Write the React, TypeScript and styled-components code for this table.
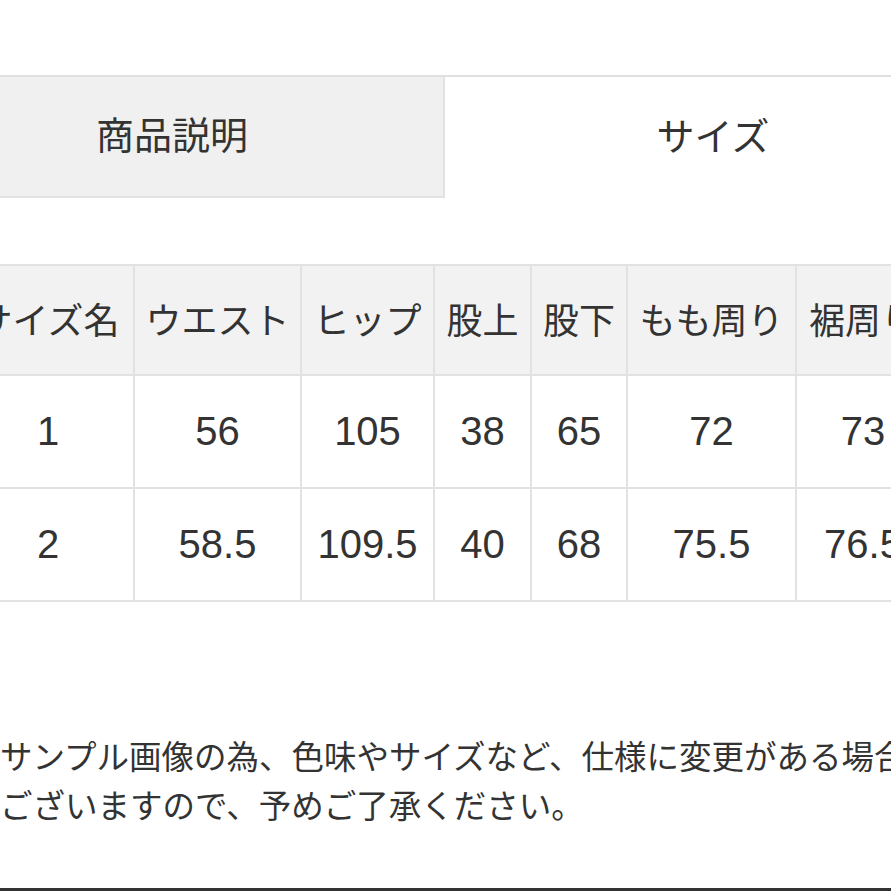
import styled, { createGlobalStyle } from 'styled-components'

const GlobalStyle = createGlobalStyle`
  html, body {
    margin: 0;
    padding: 0;
    background: #fff;
    overflow: hidden;
  }
  body {
    font-family: "Liberation Sans", "Noto Sans CJK JP", sans-serif;
    color: #333;
  }
`

const Viewport = styled.div`
  width: 891px;
  height: 891px;
  overflow: hidden;
  display: flex;
  flex-direction: column;
`

const Page = styled.div`
  width: 1080px;
  margin-left: -99px;
  display: flex;
  flex-direction: column;
  flex: 1;
`

const TabBar = styled.div`
  display: grid;
  grid-template-columns: 544px 1fr;
  margin-top: 75px;
  border-top: 2px solid #e0e0e0;
`

const Tab = styled.div<{ $active?: boolean }>`
  height: 121px;
  padding-bottom: 9px;
  display: flex;
  align-items: center;
  justify-content: center;
  font-size: 38px;
  color: #333;
  background: ${({ $active }) => ($active ? '#fff' : '#f0f0f0')};
  border-right: ${({ $active }) => ($active ? 'none' : '2px solid #e2e2e2')};
  border-bottom: ${({ $active }) => ($active ? 'none' : '2px solid #e2e2e2')};
  box-sizing: border-box;
`

const SizeTable = styled.table`
  margin-top: 66px;
  margin-left: 60px;
  border-collapse: collapse;
  table-layout: fixed;
  width: max-content;
`

const HeadCell = styled.th<{ $w: number }>`
  width: ${({ $w }) => $w}px;
  height: 110px;
  padding: 0 0 5px;
  border: 2px solid #e2e2e2;
  background: #f2f2f2;
  font-weight: 400;
  font-size: 36px;
  color: #333;
  text-align: center;
  white-space: nowrap;
  box-sizing: border-box;
`

const Cell = styled.td`
  height: 111px;
  padding: 0;
  border: 2px solid #e2e2e2;
  font-size: 40px;
  color: #333;
  text-align: center;
  white-space: nowrap;
`

const Note = styled.p`
  margin: 132px 0 0 99px;
  font-size: 32.5px;
  line-height: 49px;
  color: #333;
  white-space: nowrap;
`

const BottomEdge = styled.div`
  margin-top: auto;
  height: 3px;
  background: #333;
`

const columns = [
  { label: 'サイズ名', w: 172 },
  { label: 'ウエスト', w: 167 },
  { label: 'ヒップ', w: 133 },
  { label: '股上', w: 97 },
  { label: '股下', w: 96 },
  { label: 'もも周り', w: 169 },
  { label: '裾周り', w: 134 },
  { label: '総丈', w: 120 },
]

const rows = [
  ['1', '56', '105', '38', '65', '72', '73', '97'],
  ['2', '58.5', '109.5', '40', '68', '75.5', '76.5', '100'],
]

export default function App() {
  return (
    <>
      <GlobalStyle />
      <Viewport>
        <Page>
          <TabBar>
            <Tab>商品説明</Tab>
            <Tab $active>サイズ</Tab>
          </TabBar>
          <SizeTable>
            <thead>
              <tr>
                {columns.map((c) => (
                  <HeadCell key={c.label} $w={c.w}>{c.label}</HeadCell>
                ))}
              </tr>
            </thead>
            <tbody>
              {rows.map((r) => (
                <tr key={r[0]}>
                  {r.map((v, i) => (
                    <Cell key={i}>{v}</Cell>
                  ))}
                </tr>
              ))}
            </tbody>
          </SizeTable>
          <Note>
            サンプル画像の為、色味やサイズなど、仕様に変更がある場合が
            <br />
            ございますので、予めご了承ください。
          </Note>
          <BottomEdge />
        </Page>
      </Viewport>
    </>
  )
}
